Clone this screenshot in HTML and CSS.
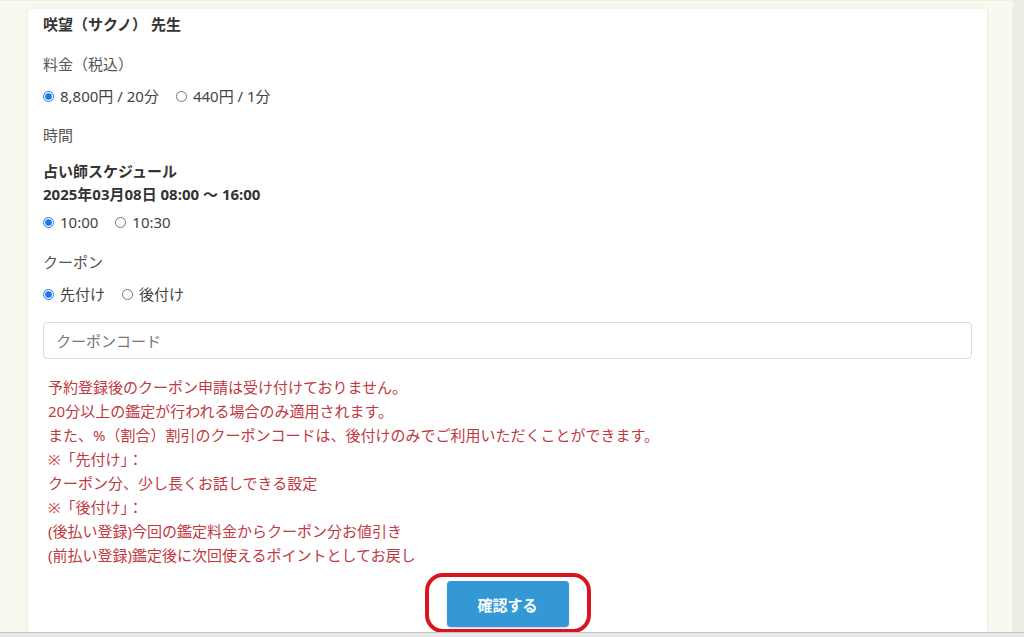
FILE: index.html
```html
<!DOCTYPE html>
<html lang="ja">
<head>
  <meta charset="UTF-8" />
  <title>予約フォーム</title>
  <link rel="stylesheet" href="styles.css">
</head>
<body>
  <div class="page">
    <div class="main">
      <form class="card">
        <h2 class="teacher">咲望（サクノ） 先生</h2>

        <p class="label">料金（税込）</p>
        <div class="choices">
          <label class="choice"><input type="radio" name="price" checked> 8,800円 / 20分</label>
          <label class="choice"><input type="radio" name="price"> 440円 / 1分</label>
        </div>

        <p class="label label-time">時間</p>
        <div class="schedule">
          <strong>占い師スケジュール</strong>
          <strong>2025年03月08日 08:00 〜 16:00</strong>
        </div>
        <div class="choices choices-time">
          <label class="choice"><input type="radio" name="time" checked> 10:00</label>
          <label class="choice"><input type="radio" name="time"> 10:30</label>
        </div>

        <p class="label">クーポン</p>
        <div class="choices">
          <label class="choice"><input type="radio" name="coupon" checked> 先付け</label>
          <label class="choice"><input type="radio" name="coupon"> 後付け</label>
        </div>

        <input class="coupon-code" type="text" placeholder="クーポンコード">

        <div class="notice">
          予約登録後のクーポン申請は受け付けておりません。<br>
          20分以上の鑑定が行われる場合のみ適用されます。<br>
          また、%（割合）割引のクーポンコードは、後付けのみでご利用いただくことができます。<br>
          ※「先付け」：<br>
          クーポン分、少し長くお話しできる設定<br>
          ※「後付け」：<br>
          (後払い登録)今回の鑑定料金からクーポン分お値引き<br>
          (前払い登録)鑑定後に次回使えるポイントとしてお戻し
        </div>

        <div class="actions">
          <span class="highlight"><button type="button" class="submit">確認する</button></span>
        </div>
      </form>
      <div class="side"></div>
    </div>
    <div class="scroll"></div>
  </div>
  <div class="bottom"></div>
</body>
</html>
```

FILE: styles.css
```css
:root {
  --font: "Noto Sans", "Noto Sans CJK JP", sans-serif;
  --cream: #faf9ef;
  --text: #333;
  --label: #555;
  --notice: #c0393f;
  --blue: #3498d4;
}
* { box-sizing: border-box; }

html, body {
  margin: 0;
  padding: 0;
  height: 100%;
  overflow: hidden;
}
body {
  display: flex;
  flex-direction: column;
  font-family: var(--font);
  color: var(--text);
  background: var(--cream);
  font-size: 15px;
}
.page {
  flex: 1;
  display: flex;
  min-height: 0;
}
.main {
  flex: 1;
  display: flex;
  padding: 8px 0 0 27px;
  border-top: 1px solid #f1efe3;
}
.card {
  flex: 1;
  background: #fff;
  border-left: 1px solid #efeee6;
  border-right: 1px solid #efeee6;
  padding: 4px 15px 0 15px;
  box-shadow: 0 -2px 3px rgba(0,0,0,0.03);
}
.side {
  width: 25px;
  border-right: 1px solid #eeede2;
}
.scroll {
  width: 11px;
  background: #ededE5;
}
.bottom {
  height: 5px;
  background: #e9e9e9;
  border-top: 1px solid #c4c4c4;
}

.teacher {
  margin: 0;
  font-size: 15px;
  font-weight: 700;
  line-height: 22px;
}
.label {
  margin: 18px 0 0;
  color: var(--label);
  line-height: 22px;
}
.label-time { margin-top: 17px; }
.choices {
  display: flex;
  gap: 17px;
  margin-top: 10px;
  line-height: 22px;
  color: #444;
}
.choices-time { margin-top: 5px; }
.choice {
  display: flex;
  align-items: center;
  gap: 5px;
}
.choice input {
  margin: 0 1px 0 0;
  width: 11px;
  height: 11px;
  accent-color: #1a73e8;
}
.schedule {
  display: flex;
  flex-direction: column;
  margin-top: 14px;
  line-height: 23px;
  color: #333;
}
.coupon-code {
  display: block;
  width: 100%;
  height: 37px;
  margin-top: 17px;
  padding: 0 12px;
  border: 1px solid #dcdcdc;
  border-radius: 4px;
  font-family: var(--font);
  font-size: 15px;
  color: #333;
}
.coupon-code::placeholder { color: #777; }

.notice {
  margin-top: 16px;
  padding-left: 5px;
  color: var(--notice);
  line-height: 24px;
}
.actions {
  display: flex;
  justify-content: center;
  margin-top: 6px;
}
.highlight {
  display: inline-block;
  padding: 4px 18px 2px;
  border: 4px solid #d8141f;
  border-radius: 18px;
}
.submit {
  width: 122px;
  height: 46px;
  border: 0;
  border-radius: 4px;
  background: var(--blue);
  color: #fff;
  font-family: var(--font);
  font-size: 15px;
  font-weight: 700;
  box-shadow: 0 1px 2px rgba(0,0,0,0.2);
}
```
